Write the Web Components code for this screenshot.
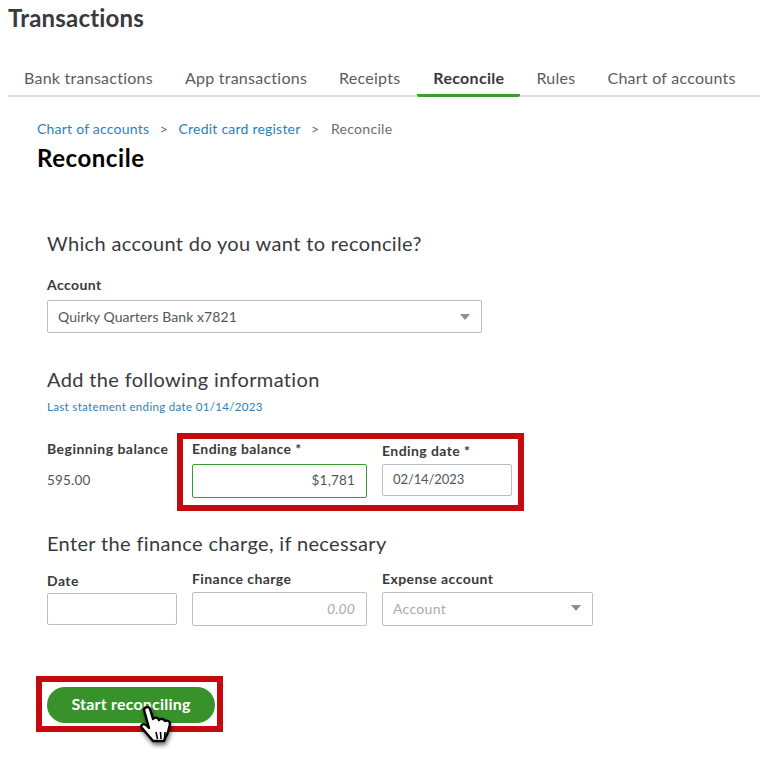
<!DOCTYPE html>
<html>
<head>
<meta charset="utf-8">
<title>Reconcile</title>
<style>
  html, body { margin: 0; background: #fff; }
  body { font-family: Lato, "Open Sans", sans-serif; color: #393a3d; width: 760px; height: 760px; overflow: hidden; }
</style>
</head>
<body>
<app-tabs title-text="Transactions">
  <a>Bank transactions</a>
  <a>App transactions</a>
  <a>Receipts</a>
  <a class="active">Reconcile</a>
  <a>Rules</a>
  <a>Chart of accounts</a>
</app-tabs>
<app-crumbs></app-crumbs>
<app-reconcile-form></app-reconcile-form>

<template id="tabs-tpl">
  <style>
    :host { display: block; padding-left: 8px; }
    h1 { margin: 0; padding-top: 4px; font-size: 24px; line-height: 27px; font-weight: 700; color: #393a3d; letter-spacing: .2px; }
    .bar { display: flex; margin-top: 27px; border-bottom: 2px solid #dcdce0; height: 37px; }
    ::slotted(a) { display: block; padding: 0 16px; font-size: 16px; line-height: 39px; height: 37px; color: #5b5c60; letter-spacing: .25px; white-space: nowrap; }
    ::slotted(a.active) { margin-left: 1px; font-weight: 700; color: #393a3d; letter-spacing: .3px; height: 36px; border-bottom: 3px solid #37a02c; border-radius: 0 0 2px 2px; }
  </style>
  <h1></h1>
  <div class="bar"><slot></slot></div>
</template>

<template id="crumbs-tpl">
  <style>
    :host { display: block; padding: 22px 0 0 37px; }
    nav { display: flex; font-size: 14px; line-height: 20px; color: #6b6c72; letter-spacing: .22px; }
    a { color: #2d7fb8; }
    i { font-style: normal; margin: 0 10.5px; }
    nav span { margin-left: 1px; letter-spacing: .3px; }
    h2 { margin: 4px 0 0; font-size: 24px; line-height: 30px; font-weight: 700; color: #000; letter-spacing: .55px; }
  </style>
  <nav><a>Chart of accounts</a><i>&gt;</i><a>Credit card register</a><i>&gt;</i><span>Reconcile</span></nav>
  <h2>Reconcile</h2>
</template>

<template id="field-tpl">
  <style>
    :host { display: block; font-size: 14px; }
    label { display: block; font-weight: 700; font-size: 14px; line-height: 18px; color: #393a3d; letter-spacing: .42px; white-space: nowrap; }
    .box { display: flex; align-items: center; justify-content: space-between; box-sizing: border-box; height: var(--h, 32px); margin-top: var(--gap, 6px); padding: 0 11px var(--pb, 0) 10px; background: #fff; border: 1px solid #babec5; border-radius: 2px; font-size: var(--fs, 14px); color: #54555a; letter-spacing: var(--ls, .08px); }
    :host([tone="ok"]) .box { border-color: #37a02c; }
    :host([flush="end"]) .box { justify-content: flex-end; }
    :host([muted]) .box { color: #a9abb0; }
    :host([italic]) .box { font-style: italic; }
    .caret { width: 0; height: 0; border-left: 5px solid transparent; border-right: 5px solid transparent; border-top: 6px solid #8d9096; display: none; }
    :host([select]) .caret { display: block; }
  </style>
  <label></label>
  <div class="box"><span class="val"></span><span class="caret"></span></div>
</template>

<template id="highlight-tpl">
  <style>
    :host { display: block; border: 6px solid #c40a0e; box-sizing: border-box; position: relative; }
  </style>
  <slot></slot>
</template>

<template id="form-tpl">
  <style>
    :host { display: block; padding: 0 0 0 47px; }
    h3 { margin: 0; font-size: 20px; line-height: 26px; font-weight: 400; color: #393a3d; letter-spacing: .35px; }
    .first { margin-top: 57px; }
    .acct { margin-top: 20px; width: 435px; --h: 33px; --gap: 6px; }
    .second { margin-top: 33px; }
    .last { margin: 7px 0 0; font-size: 11.5px; line-height: 16px; color: #2d7fb8; letter-spacing: .33px; }
    .row1 { display: flex; align-items: flex-start; margin-top: 18px; }
    .begin { width: 130px; padding-top: 7px; }
    .begin b { display: block; font-size: 14px; line-height: 18px; letter-spacing: .48px; white-space: nowrap; }
    .begin span { display: block; margin-top: 13px; font-size: 13.5px; line-height: 18px; color: #54555a; letter-spacing: .2px; }
    app-highlight.hl1 { width: 347px; height: 78px; }
    .inner { display: flex; gap: 15px; padding: 1px 6px 0 9px; }
    .end-bal { width: 175px; --h: 34px; --gap: 6px; --fs: 13.5px; --ls: .2px; --pb: 2px; }
    .end-date { width: 130px; --h: 32px; --gap: 4px; --fs: 13px; --ls: -.1px; --pb: 2px; padding-top: 2px; }
    .third { margin-top: 19px; }
    .row2 { display: flex; gap: 15px; margin-top: 14px; align-items: flex-start; }
    .f-date { width: 130px; padding-top: 2px; --h: 32px; --gap: 3px; }
    .f-charge { width: 175px; --h: 34px; --gap: 4px; --pb: 2px; }
    .f-exp { width: 211px; --h: 34px; --gap: 4px; --ls: .3px; --pb: 2px; }
    app-highlight.hl2 { width: 187px; height: 56px; margin: 50px 0 0 -11px; }
    button { display: block; margin: 5px 0 0 5px; width: 168px; height: 36px; border: 0; border-radius: 18px; background: #37922b; color: #fff; font: 700 16px/34px Lato, sans-serif; letter-spacing: .2px; padding: 0 0 2px; }
    .hand { position: absolute; left: 98px; top: 23px; width: 34px; height: 44px; filter: drop-shadow(1px 3px 2px rgba(0,0,0,.55)); }
  </style>
  <h3 class="first">Which account do you want to reconcile?</h3>
  <app-field class="acct" label="Account" value="Quirky Quarters Bank x7821" select></app-field>
  <h3 class="second">Add the following information</h3>
  <p class="last">Last statement ending date 01/14/2023</p>
  <div class="row1">
    <div class="begin"><b>Beginning balance</b><span>595.00</span></div>
    <app-highlight class="hl1">
      <div class="inner">
        <app-field class="end-bal" label="Ending balance *" value="$1,781" tone="ok" flush="end"></app-field>
        <app-field class="end-date" label="Ending date *" value="02/14/2023"></app-field>
      </div>
    </app-highlight>
  </div>
  <h3 class="third">Enter the finance charge, if necessary</h3>
  <div class="row2">
    <app-field class="f-date" label="Date" value=""></app-field>
    <app-field class="f-charge" label="Finance charge" value="0.00" flush="end" muted italic></app-field>
    <app-field class="f-exp" label="Expense account" value="Account" muted select></app-field>
  </div>
  <app-highlight class="hl2">
    <button>Start reconciling</button>
    <svg class="hand" viewBox="0 0 34 44">
      <path d="M4 5c0-3 5-4 6-1l3 10c2-2 5-2 6 1 2-2 5-1 6 1 2-1 5 0 5 3l-2 8c-1 3-3 6-4 9H13c-3-4-7-8-11-13-2-3 1-5 4-3l3 3z" fill="#fff" stroke="#000" stroke-width="2.4" stroke-linejoin="round"/>
      <path d="M16 27l1.500 7M20.500 27l.5 7M25 27l-.5 7" fill="none" stroke="#000" stroke-width="1.600"/>
    </svg>
  </app-highlight>
</template>

<script>
  function simple(name, tplId, setup) {
    customElements.define(name, class extends HTMLElement {
      constructor() {
        super();
        this.attachShadow({mode: 'open'});
        this.shadowRoot.appendChild(document.getElementById(tplId).content.cloneNode(true));
      }
      connectedCallback() {
        if (setup) setup(this);
      }
    });
  }

  simple('app-tabs', 'tabs-tpl', el => {
    el.shadowRoot.querySelector('h1').textContent = el.getAttribute('title-text');
  });
  simple('app-crumbs', 'crumbs-tpl');
  simple('app-highlight', 'highlight-tpl');
  simple('app-field', 'field-tpl', el => {
    el.shadowRoot.querySelector('label').textContent = el.getAttribute('label');
    el.shadowRoot.querySelector('.val').textContent = el.getAttribute('value');
  });
  simple('app-reconcile-form', 'form-tpl');
</script>
</body>
</html>
